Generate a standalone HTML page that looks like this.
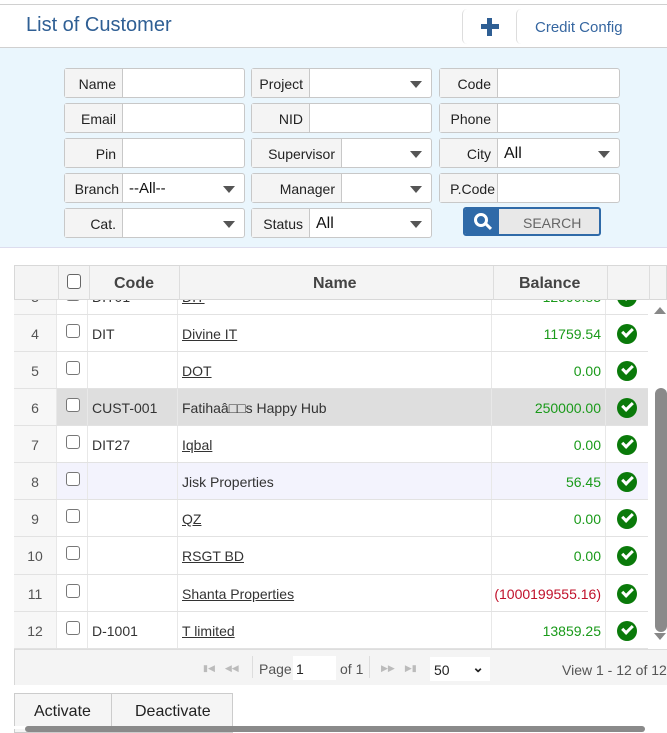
<!DOCTYPE html>
<html><head><meta charset="utf-8"><style>
*{box-sizing:border-box;margin:0;padding:0}
body{width:667px;height:729px;overflow:hidden;background:#fff;font-family:"Liberation Sans",sans-serif;font-size:14px;color:#333;position:relative}
.a{position:absolute}
.fld{position:absolute;height:30px;border:1px solid #c8c8c8;border-radius:3px;background:#fff;display:flex}
.fld .l{background:#f4f4f4;border-right:1px solid #c8c8c8;text-align:right;padding-right:6px;line-height:30px;font-size:14px;color:#222}
.fld .v{flex:1;position:relative;line-height:30px;padding-left:6px;font-size:15px;color:#111}
.tri{position:absolute;right:9px;top:12px;width:0;height:0;border-left:6px solid transparent;border-right:6px solid transparent;border-top:7px solid #555}
.row{position:absolute;left:14px;width:634px;height:37px;border-bottom:1px solid #e2e2e2;font-size:14px}
.row div{position:absolute;top:0;height:36px;line-height:38px;border-right:1px solid #e8e8e8}
.c0{left:0;width:43px;text-align:center;color:#555;background:#f7f7f7}
.c1{left:43px;width:31px}
.c2{left:74px;width:90px;padding-left:4px}
.c3{left:164px;width:314px;padding-left:4px}
.c4{left:478px;width:114px;text-align:right;padding-right:4px;color:#1a9a1a}
.c5{left:592px;width:42px;border-right:none!important}
.cb{position:absolute;left:9px;top:9px;width:14px;height:14px;border:1px solid #777;border-radius:3px;background:#fff}
.ok{position:absolute;left:11px;top:9px;width:20px;height:20px;border-radius:50%;background:#0a7a0a}
.ok::after{content:"";position:absolute;left:5px;top:4px;width:8px;height:4px;border-left:3px solid #fff;border-bottom:3px solid #fff;transform:rotate(-45deg)}
u{text-decoration:underline}
</style></head><body>
<div class="a" style="left:0;top:4px;width:667px;height:44px;border-top:1px solid #d0d0d0;border-bottom:1px solid #d0d0d0"></div>
<div class="a" style="left:26px;top:14px;font-size:20px;color:#2f5f94">List of Customer</div>
<div class="a" style="left:462px;top:9px;width:60px;height:35px;border-left:1px solid #ddd;border-radius:5px"></div>
<div class="a" style="left:516px;top:9px;width:60px;height:35px;border-left:1px solid #ddd;border-radius:5px"></div>
<div class="a" style="left:481px;top:24px;width:18px;height:5px;background:#2f5f94"></div>
<div class="a" style="left:487px;top:18px;width:5px;height:18px;background:#2f5f94"></div>
<div class="a" style="left:535px;top:19px;font-size:15px;color:#3566a0">Credit Config</div>
<div class="a" style="left:0;top:48px;width:667px;height:200px;background:#eaf6fd;border-bottom:1px solid #dde"></div>

<div class="fld" style="left:64px;top:68px;width:181px"><div class="l" style="width:58px">Name</div><div class="v"></div></div>
<div class="fld" style="left:251px;top:68px;width:181px"><div class="l" style="width:58px">Project</div><div class="v"><span class="tri"></span></div></div>
<div class="fld" style="left:439px;top:68px;width:181px"><div class="l" style="width:58px">Code</div><div class="v"></div></div>
<div class="fld" style="left:64px;top:103px;width:181px"><div class="l" style="width:58px">Email</div><div class="v"></div></div>
<div class="fld" style="left:251px;top:103px;width:181px"><div class="l" style="width:58px">NID</div><div class="v"></div></div>
<div class="fld" style="left:439px;top:103px;width:181px"><div class="l" style="width:58px">Phone</div><div class="v"></div></div>
<div class="fld" style="left:64px;top:138px;width:181px"><div class="l" style="width:58px">Pin</div><div class="v"></div></div>
<div class="fld" style="left:251px;top:138px;width:181px"><div class="l" style="width:90px">Supervisor</div><div class="v"><span class="tri"></span></div></div>
<div class="fld" style="left:439px;top:138px;width:181px"><div class="l" style="width:58px">City</div><div class="v" style="font-size:16px">All<span class="tri"></span></div></div>
<div class="fld" style="left:64px;top:173px;width:181px"><div class="l" style="width:58px;padding-right:3px">Branch</div><div class="v">--All--<span class="tri"></span></div></div>
<div class="fld" style="left:251px;top:173px;width:181px"><div class="l" style="width:90px">Manager</div><div class="v"><span class="tri"></span></div></div>
<div class="fld" style="left:439px;top:173px;width:181px"><div class="l" style="width:58px;padding-right:2px">P.Code</div><div class="v"></div></div>
<div class="fld" style="left:64px;top:208px;width:181px"><div class="l" style="width:58px">Cat.</div><div class="v"><span class="tri"></span></div></div>
<div class="fld" style="left:251px;top:208px;width:181px"><div class="l" style="width:58px">Status</div><div class="v" style="font-size:16px">All<span class="tri"></span></div></div>
<div class="a" style="left:463px;top:207px;width:138px;height:29px;border:2px solid #2f6aa8;border-radius:3px;background:#e8e8e8;overflow:hidden">
<div class="a" style="left:0;top:0;width:34px;height:25px;background:#2f6aa8"></div>
<div class="a" style="left:9px;top:4px;width:14px;height:14px;border:3px solid #fff;border-radius:50%"></div>
<div class="a" style="left:20px;top:16px;width:7px;height:3px;background:#fff;transform:rotate(45deg)"></div>
<div class="a" style="left:58px;top:6px;font-size:14px;color:#666">SEARCH</div></div>

<div class="a" style="left:14px;top:265px;width:653px;height:420px;border:1px solid #d8d8d8"></div>
<div class="a" style="left:14px;top:265px;width:653px;height:35px;background:#f4f4f4;border:1px solid #d8d8d8;font-weight:bold;font-size:16px;color:#444">
<div class="a" style="left:43px;top:0;width:1px;height:34px;background:#ddd"></div>
<div class="a" style="left:52px;top:8px;width:14px;height:15px;border:1px solid #666;border-radius:3px;background:#fff"></div>
<div class="a" style="left:74px;top:0;width:1px;height:34px;background:#ddd"></div>
<div class="a" style="left:99px;top:9px">Code</div>
<div class="a" style="left:164px;top:0;width:1px;height:34px;background:#ddd"></div>
<div class="a" style="left:298px;top:9px">Name</div>
<div class="a" style="left:478px;top:0;width:1px;height:34px;background:#ddd"></div>
<div class="a" style="left:504px;top:9px">Balance</div>
<div class="a" style="left:592px;top:0;width:1px;height:34px;background:#ddd"></div>
<div class="a" style="left:634px;top:0;width:1px;height:34px;background:#ddd"></div></div>

<div class="a" style="left:14px;top:300px;width:634px;height:349px;overflow:hidden">
<div class="row" style="top:-22px;left:0"><div class="c0">3</div><div class="c1"><span class="cb"></span></div><div class="c2">DIT01</div><div class="c3"><u>DIT</u></div><div class="c4">12990.83</div><div class="c5"><span class="ok"></span></div></div>
</div>
<div class="row" style="top:315px"><div class="c0">4</div><div class="c1"><span class="cb"></span></div><div class="c2">DIT</div><div class="c3"><u>Divine IT</u></div><div class="c4">11759.54</div><div class="c5"><span class="ok"></span></div></div>
<div class="row" style="top:352px"><div class="c0">5</div><div class="c1"><span class="cb"></span></div><div class="c2"></div><div class="c3"><u>DOT</u></div><div class="c4">0.00</div><div class="c5"><span class="ok"></span></div></div>
<div class="row" style="top:389px;background:#dedede"><div class="c0">6</div><div class="c1"><span class="cb"></span></div><div class="c2">CUST-001</div><div class="c3">Fatihaâ&#9633;&#9633;s Happy Hub</div><div class="c4">250000.00</div><div class="c5"><span class="ok"></span></div></div>
<div class="row" style="top:426px"><div class="c0">7</div><div class="c1"><span class="cb"></span></div><div class="c2">DIT27</div><div class="c3"><u>Iqbal</u></div><div class="c4">0.00</div><div class="c5"><span class="ok"></span></div></div>
<div class="row" style="top:463px;background:#f3f3fd"><div class="c0">8</div><div class="c1"><span class="cb"></span></div><div class="c2"></div><div class="c3">Jisk Properties</div><div class="c4">56.45</div><div class="c5"><span class="ok"></span></div></div>
<div class="row" style="top:500px"><div class="c0">9</div><div class="c1"><span class="cb"></span></div><div class="c2"></div><div class="c3"><u>QZ</u></div><div class="c4">0.00</div><div class="c5"><span class="ok"></span></div></div>
<div class="row" style="top:537px;height:38px"><div class="c0" style="height:37px">10</div><div class="c1" style="height:37px"><span class="cb"></span></div><div class="c2" style="height:37px"></div><div class="c3" style="height:37px"><u>RSGT BD</u></div><div class="c4" style="height:37px">0.00</div><div class="c5" style="height:37px"><span class="ok"></span></div></div>
<div class="row" style="top:575px"><div class="c0">11</div><div class="c1"><span class="cb"></span></div><div class="c2"></div><div class="c3"><u>Shanta Properties</u></div><div class="c4" style="color:#c0102a">(1000199555.16)</div><div class="c5"><span class="ok"></span></div></div>
<div class="row" style="top:612px"><div class="c0">12</div><div class="c1"><span class="cb"></span></div><div class="c2">D-1001</div><div class="c3"><u>T limited</u></div><div class="c4">13859.25</div><div class="c5"><span class="ok"></span></div></div>

<div class="a" style="left:648px;top:300px;width:19px;height:349px;background:#fff"></div>
<div class="a" style="left:654px;top:307px;border-left:6px solid transparent;border-right:6px solid transparent;border-bottom:7px solid #888"></div>
<div class="a" style="left:655px;top:388px;width:12px;height:244px;background:#8a8a8a;border-radius:6px"></div>
<div class="a" style="left:654px;top:633px;border-left:6px solid transparent;border-right:6px solid transparent;border-top:7px solid #888"></div>

<div class="a" style="left:15px;top:649px;width:652px;height:36px;background:#f4f4f4;border-top:1px solid #ddd;font-size:14px;color:#555">
<div class="a" style="left:188px;top:13px;font-size:9px;color:#bbb">&#9646;&#9664;&nbsp;&nbsp;&nbsp;&nbsp;&#9664;&#9664;</div>
<div class="a" style="left:237px;top:6px;width:1px;height:22px;background:#ddd"></div>
<div class="a" style="left:244px;top:11px">Page</div>
<div class="a" style="left:278px;top:6px;width:43px;height:24px;background:#fff;padding:5px 3px;color:#222">1</div>
<div class="a" style="left:325px;top:11px">of 1</div>
<div class="a" style="left:354px;top:6px;width:1px;height:22px;background:#ddd"></div>
<div class="a" style="left:366px;top:13px;font-size:9px;color:#bbb">&#9654;&#9654;&nbsp;&nbsp;&nbsp;&nbsp;&#9654;&#9646;</div>
<div class="a" style="left:415px;top:7px;width:60px;height:24px;background:#fff;padding:5px 4px;color:#222">50<span style="position:absolute;right:6px;top:2px;font-weight:bold">&#8964;</span></div>
<div class="a" style="left:547px;top:12px">View 1 - 12 of 12</div></div>

<div class="a" style="left:14px;top:693px;width:219px;height:40px;border:1px solid #ccc;background:#f5f5f5"></div>
<div class="a" style="left:111px;top:693px;width:1px;height:40px;background:#ccc"></div>
<div class="a" style="left:34px;top:703px;font-size:16px;color:#222">Activate</div>
<div class="a" style="left:135px;top:703px;font-size:16px;color:#222">Deactivate</div>
<div class="a" style="left:0;top:726px;width:667px;height:3px;background:#fff"></div>
<div class="a" style="left:25px;top:726px;width:620px;height:6px;background:#8a8a8a;border-radius:3px"></div>
</body></html>
